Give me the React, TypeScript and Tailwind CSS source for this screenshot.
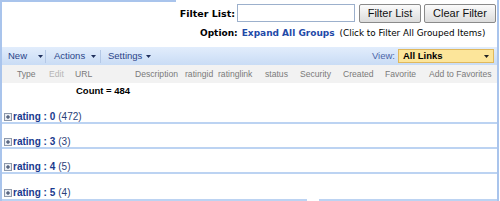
const groups = [
  { value: "0", count: 472 },
  { value: "3", count: 3 },
  { value: "4", count: 5 },
  { value: "5", count: 4 },
];

const columns = [
  { label: "Type", w: "w-[32px]", faded: false },
  { label: "Edit", w: "w-[26px]", faded: true },
  { label: "URL", w: "w-[60px]", faded: false },
  { label: "Description", w: "w-[50px]", faded: false },
  { label: "ratingid", w: "w-[33px]", faded: false },
  { label: "ratinglink", w: "w-[47px]", faded: false },
  { label: "status", w: "w-[35px]", faded: false },
  { label: "Security", w: "w-[43px]", faded: false },
  { label: "Created", w: "w-[42px]", faded: false },
  { label: "Favorite", w: "w-[44px]", faded: false },
  { label: "Add to Favorites", w: "", faded: false },
];

function Caret({ className }: { className?: string }) {
  return (
    <svg width="5" height="3" viewBox="0 0 5 3" className={className}>
      <path d="M0 0h5L2.5 3z" fill="#1f2f5c" />
    </svg>
  );
}

function PlusBox() {
  return (
    <svg width="8" height="8" viewBox="0 0 8 8" className="mr-[1px] shrink-0">
      <rect x="0.5" y="0.5" width="7" height="7" fill="#e9edf3" stroke="#8d98ab" />
      <path d="M2 4h4M4 2v4" stroke="#2b3b5c" strokeWidth="1" />
    </svg>
  );
}

export default function App() {
  return (
    <div className="w-[500px] h-[201px] overflow-hidden bg-white font-['DejaVu_Sans',sans-serif]">
      <div className="relative h-full w-[499px] border-l-2 border-r-2 border-[#a9c4ec]">
        <div className="absolute left-[-2px] top-0 h-[2px] w-[176px] bg-[#a9c4ec]" />

        {/* filter area */}
        <div className="flex h-[26px] items-start pt-[4px] pr-[1px]">
          <div className="flex-1" />
          <span className="mt-[3px] mr-[2px] text-[9.5px] font-bold text-black">Filter List:</span>
          <div className="h-[18px] w-[118px] border border-[#9cb0cc] bg-white" />
          <button className="ml-[4px] h-[19px] w-[62px] rounded-[2px] border border-[#8a8a8a] bg-gradient-to-b from-[#fbfbfb] to-[#dcdcdc] font-['Liberation_Sans',sans-serif] text-[11px] leading-none text-[#111]">
            Filter List
          </button>
          <button className="ml-[3px] h-[19px] w-[72px] rounded-[2px] border border-[#8a8a8a] bg-gradient-to-b from-[#fbfbfb] to-[#dcdcdc] font-['Liberation_Sans',sans-serif] text-[11px] leading-none text-[#111]">
            Clear Filter
          </button>
        </div>
        <div className="flex h-[21px] items-start pt-[1px] pl-[198px] text-[9px] leading-[12px]">
          <span className="font-bold text-black">Option:</span>
          <span className="ml-[4px] font-bold text-[#1f4aa8]">Expand All Groups</span>
          <span className="ml-[5px] text-[8.8px] text-black">(Click to Filter All Grouped Items)</span>
        </div>

        {/* toolbar */}
        <div className="flex h-[18px] items-center bg-gradient-to-b from-[#e2edfc] to-[#c9dcf5] font-['Liberation_Sans',sans-serif] text-[9.5px] text-[#2a4488]">
          <div className="flex w-[43px] items-center pl-[6px]">
            New
            <Caret className="ml-[11px]" />
          </div>
          <div className="h-[13px] w-px bg-[#b4c8e6]" />
          <div className="flex w-[54px] items-center pl-[8px]">
            Actions
            <Caret className="ml-[6px]" />
          </div>
          <div className="h-[13px] w-px bg-[#b4c8e6]" />
          <div className="flex items-center pl-[7px]">
            Settings
            <Caret className="ml-[4px]" />
          </div>
          <div className="flex-1" />
          <span className="mr-[3px] text-[#4a64a8]">View:</span>
          <div className="mr-[3px] flex h-[14px] w-[96px] items-center justify-between border border-[#e0b85c] bg-[#fce59a] pl-[4px] pr-[4px]">
            <span className="font-bold text-black">All Links</span>
            <svg width="5" height="3" viewBox="0 0 5 3">
              <path d="M0 0h5L2.5 3z" fill="#222" />
            </svg>
          </div>
        </div>

        {/* column header */}
        <div className="flex h-[18px] items-center bg-[#f2f2f2] pl-[15px] font-['Liberation_Sans',sans-serif] text-[8.6px] text-[#7a7a7a]">
          {columns.map((c) => (
            <span
              key={c.label}
              className={`${c.w} shrink-0 whitespace-nowrap ${c.faded ? "text-[#b5b5b5]" : ""}`}
            >
              {c.label}
            </span>
          ))}
        </div>

        <div className="flex h-[16px] items-center pl-[74px] font-['Liberation_Sans',sans-serif] text-[9.5px] font-bold text-black">
          Count = 484
        </div>

        {/* groups */}
        <div>
          {groups.map((g, i) => (
            <div
              key={g.value}
              className={`flex h-[25px] items-center pt-[12px] pl-[2px] font-['Liberation_Sans',sans-serif] text-[10px] leading-[12px] text-[#1a3a8e] ${
                i < groups.length - 1 ? "border-b-2 border-[#bcd3f2]" : ""
              }`}
            >
              <PlusBox />
              <span className="font-bold">rating : {g.value}</span>
              <span className="ml-[3px] text-[#2b3f78]">({g.count})</span>
            </div>
          ))}
          <div className="flex h-[2px]">
            <div className="w-[305px] bg-[#bcd3f2]" />
            <div className="w-[12px]" />
            <div className="flex-1 bg-[#bcd3f2]" />
          </div>
        </div>
      </div>
    </div>
  );
}
